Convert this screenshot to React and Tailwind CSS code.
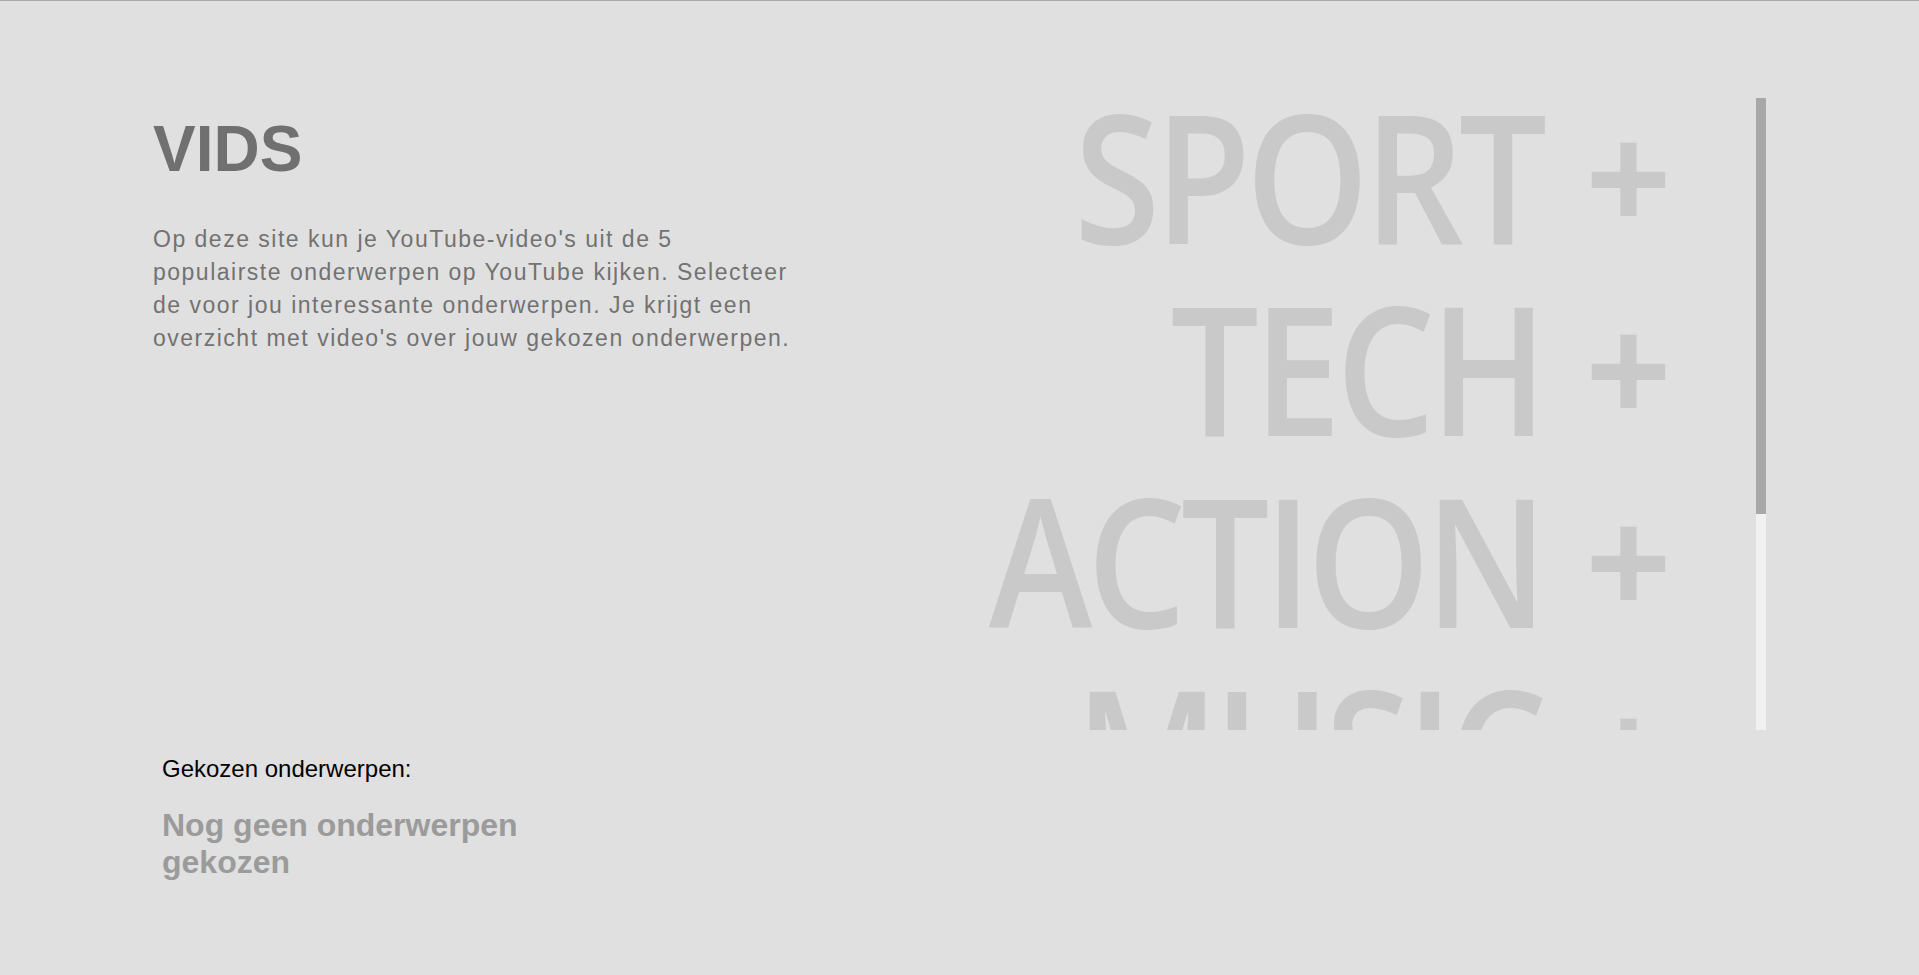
import React from 'react';

const topics = ['SPORT', 'TECH', 'ACTION', 'MUSIC', 'GAMING'];

export default function App() {
  return (
    <div className="min-h-screen bg-[#e0e0e0] border-t border-[#a9a9a9] font-['Liberation_Sans',Arial,sans-serif]">
      <div className="flex justify-between px-[153px] pt-[97px]">
        {/* Intro */}
        <div className="w-[640px] pt-[14px]">
          <h1 className="text-[64px] leading-[normal] font-bold text-[#707070]">VIDS</h1>
          <p className="mt-[37px] text-[23px] leading-[33px] tracking-[1.5px] text-[#727272]">
            Op deze site kun je YouTube-video's uit de 5 populairste onderwerpen op YouTube kijken.
            Selecteer de voor jou interessante onderwerpen. Je krijgt een overzicht met video's over
            jouw gekozen onderwerpen.
          </p>
        </div>

        {/* Topics list + scrollbar */}
        <div className="flex">
          <div className="w-[810px] h-[632px] overflow-y-auto overflow-x-hidden [scrollbar-width:none]">
            {topics.map((t) => (
              <div
                key={t}
                className="flex justify-end items-baseline h-[192px] pr-[76px] text-[180px] leading-[153px] font-semibold text-[#c9c9c9] font-['Open_Sans',sans-serif] whitespace-nowrap cursor-pointer select-none"
              >
                <span className="shrink-0 origin-right scale-x-[0.87] tracking-[-6px]">{t}</span>
                <span className="shrink-0 ml-[35px] scale-[0.84] font-bold">+</span>
              </div>
            ))}
          </div>
          <div className="w-[10px] h-[632px] bg-[#f1f1f1]">
            <div className="h-[416px] bg-[#a8a8a8]" />
          </div>
        </div>
      </div>

      {/* Chosen topics */}
      <div className="pl-[162px] pt-[25px]">
        <p className="text-[24px] leading-[normal] text-black">Gekozen onderwerpen:</p>
        <p className="mt-[24px] w-[400px] text-[32px] leading-[normal] font-bold text-[#9b9b9b]">
          Nog geen onderwerpen gekozen
        </p>
      </div>
    </div>
  );
}
